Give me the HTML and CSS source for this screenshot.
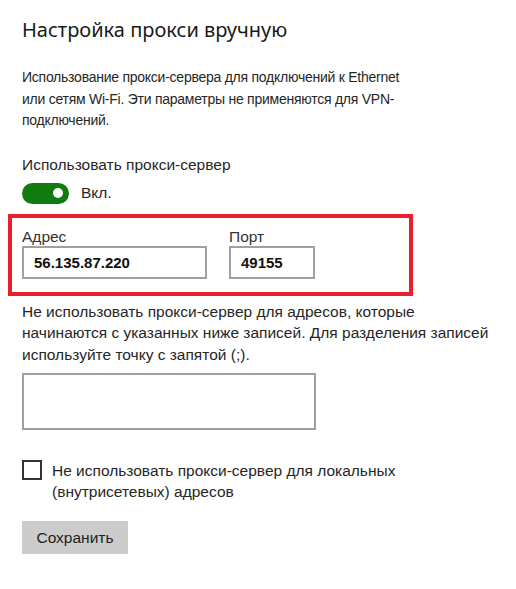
FILE: index.html
```html
<!DOCTYPE html>
<html lang="ru">
<head>
    <meta charset="UTF-8">
    <title>Настройка прокси вручную</title>
    <link rel="stylesheet" href="styles.css">
</head>
<body>
    <main class="page">
        <h1 class="title">Настройка прокси вручную</h1>

        <p class="text text-intro">Использование прокси-сервера для подключений к Ethernet<br>или сетям Wi-Fi. Эти параметры не применяются для VPN-<br>подключений.</p>

        <div class="label">Использовать прокси-сервер</div>
        <div class="toggle-row">
            <span class="toggle"><span class="knob"></span></span>
            <span class="toggle-text">Вкл.</span>
        </div>

        <div class="highlight">
            <div class="field">
                <div class="field-label">Адрес</div>
                <div class="input input-address">56.135.87.220</div>
            </div>
            <div class="field">
                <div class="field-label">Порт</div>
                <div class="input input-port">49155</div>
            </div>
        </div>

        <p class="text text-exceptions">Не использовать прокси-сервер для адресов, которые<br>начинаются с указанных ниже записей. Для разделения записей<br>используйте точку с запятой (;).</p>
        <div class="textbox"></div>

        <div class="check-row">
            <span class="checkbox"></span>
            <span class="check-text">Не использовать прокси-сервер для локальных<br>(внутрисетевых) адресов</span>
        </div>

        <button class="save">Сохранить</button>
    </main>
</body>
</html>
```

FILE: styles.css
```css
body {
    margin: 0;
    padding: 0;
    background-color: #fff;
    color: #262626;
    font-family: 'Liberation Sans', Arial, sans-serif;
}

.page {
    padding: 16px 0 0 22px;
}

.title {
    margin: 0;
    font-family: 'Noto Sans', 'Open Sans', sans-serif;
    font-size: 20px;
    font-weight: 400;
    line-height: 28px;
    color: #1a1a1a;
}

.text {
    margin: 23px 0 0;
    font-size: 15.5px;
    line-height: 21.5px;
    white-space: nowrap;
}

.text-intro {
    font-size: 14px;
    letter-spacing: -0.25px;
}

.label {
    margin-top: 22px;
    font-size: 15.5px;
    line-height: 22px;
}

.toggle-row {
    display: flex;
    align-items: center;
    gap: 12px;
    margin-top: 7px;
}

.toggle {
    display: flex;
    align-items: center;
    justify-content: flex-end;
    width: 47px;
    height: 21px;
    padding: 0 6px;
    box-sizing: border-box;
    border-radius: 11px;
    background-color: #107c10;
}

.knob {
    width: 10px;
    height: 10px;
    border-radius: 50%;
    background-color: #fff;
}

.toggle-text {
    font-size: 15.5px;
}

.highlight {
    display: flex;
    gap: 22px;
    width: 405px;
    box-sizing: border-box;
    margin: 10px 0 0 -14px;
    padding: 9px 10px 13px;
    border: 4px solid #e8202c;
}

.field-label {
    font-size: 15.5px;
    line-height: 19px;
    color: #333;
}

.input {
    display: flex;
    align-items: center;
    height: 33px;
    box-sizing: border-box;
    padding: 0 10px;
    border: 2px solid #a0a0a0;
    font-size: 15px;
    font-weight: 700;
    color: #111;
}

.input-address {
    width: 185px;
}

.input-port {
    width: 86px;
}

.text-exceptions {
    margin-top: 5px;
}

.textbox {
    width: 294px;
    height: 57px;
    box-sizing: border-box;
    margin-top: 8px;
    border: 2px solid #a0a0a0;
}

.check-row {
    display: flex;
    gap: 10px;
    margin-top: 30px;
}

.checkbox {
    flex: none;
    width: 20px;
    height: 20px;
    box-sizing: border-box;
    border: 2px solid #333;
}

.check-text {
    font-size: 15.5px;
    line-height: 21px;
}

.save {
    display: block;
    margin-top: 19px;
    width: 106px;
    height: 33px;
    border: none;
    background-color: #cccccc;
    font-family: 'Liberation Sans', Arial, sans-serif;
    font-size: 15.5px;
    color: #222;
}
```
